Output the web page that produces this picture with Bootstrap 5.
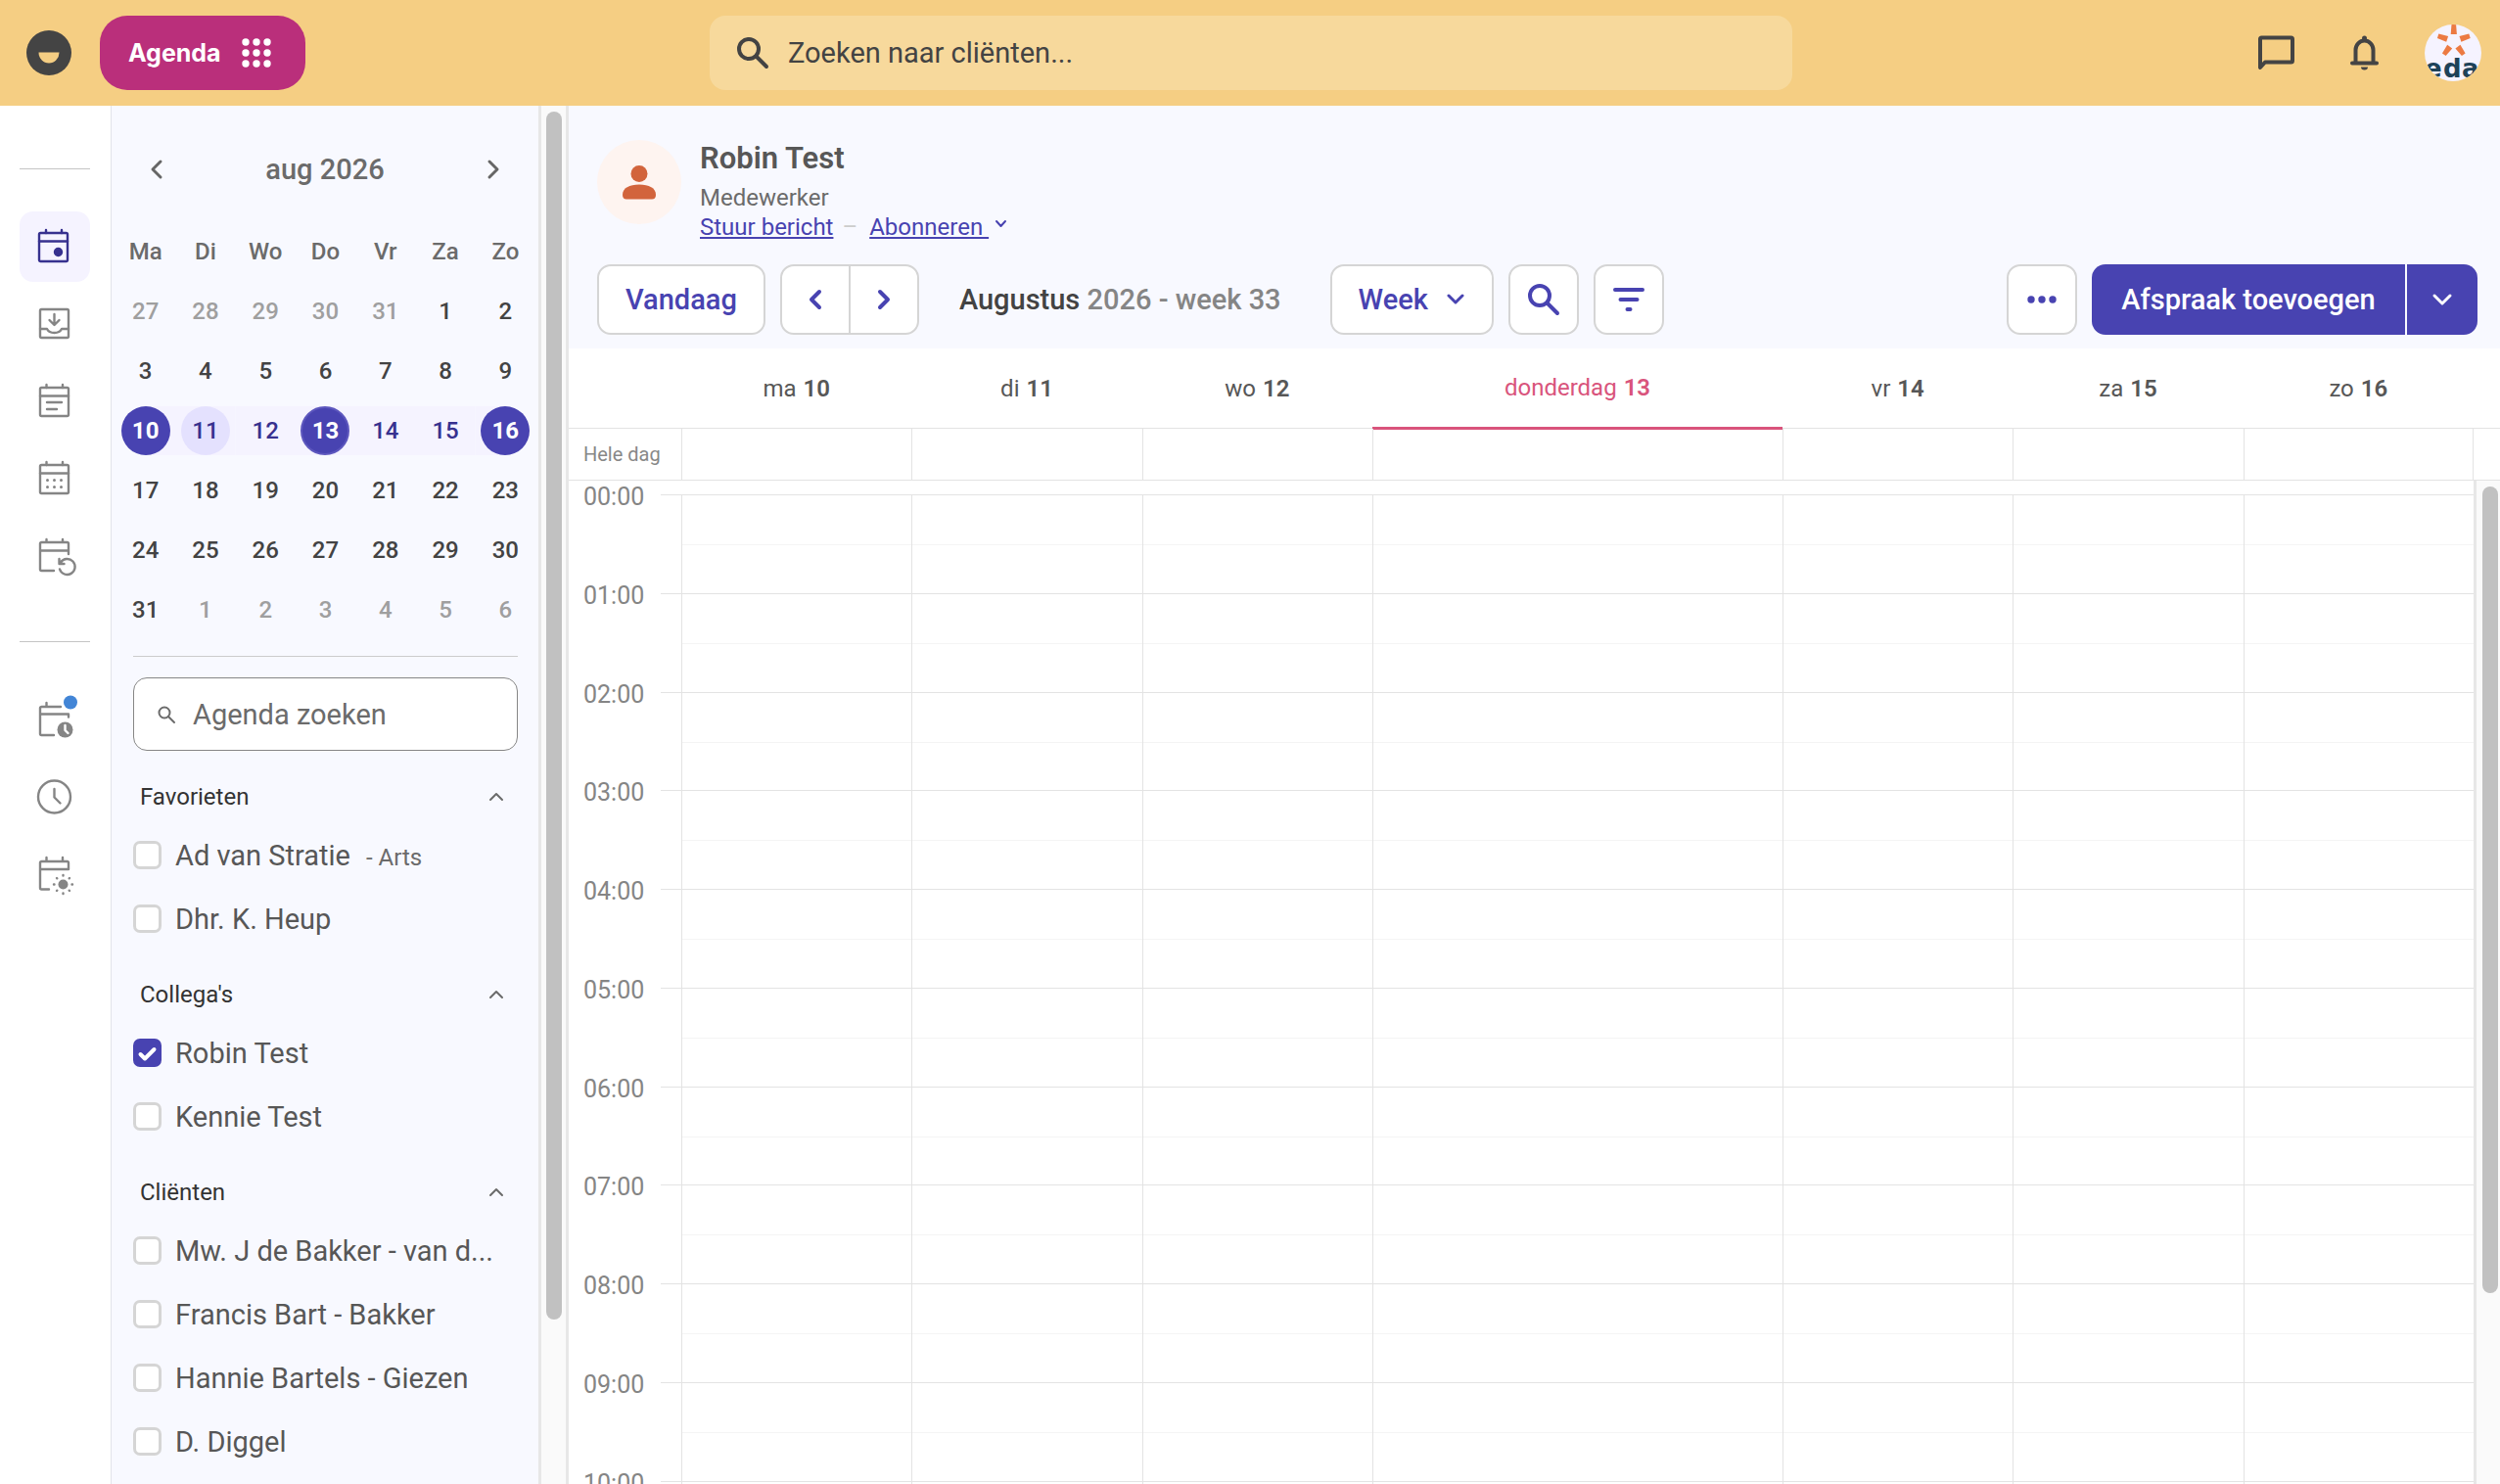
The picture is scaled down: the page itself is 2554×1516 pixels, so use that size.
<!DOCTYPE html>
<html lang="nl">
<head>
<meta charset="utf-8">
<meta name="viewport" content="width=device-width, initial-scale=1">
<title>Agenda</title>
<link rel="stylesheet" href="https://cdn.jsdelivr.net/npm/bootstrap@5.3.0/dist/css/bootstrap.min.css">
<style>
:root{--brand:#4843b1;--brand-dark:#37318f;--panel:#f8f9ff;--line:#e3e3e3;--edge:#d5d5d5;--ink:#434343;--soft:#6b6b6b;--today:#d9547c}
body{font-family:Roboto,sans-serif;font-size:29px;line-height:40px;color:#575757;height:100vh;overflow:hidden;background:#fff}
svg{display:block;overflow:visible;flex:none}
.ico{fill:none;stroke:currentColor;stroke-width:2;stroke-linecap:round;stroke-linejoin:round}
.ico-3{stroke-width:3}
.ico-4{stroke-width:4}
.text-s{font-size:24px;line-height:30px}
.soft{color:var(--soft)}
.fill-area{min-height:0;min-width:0}
.scroll-area{overflow:hidden auto;scrollbar-width:none}
.scroll-area::-webkit-scrollbar{display:none}

/* top bar */
.topbar{height:108px;background:#f5ce83;display:grid;grid-template-columns:725fr 1106fr 723fr;align-items:center;flex:none}
.home-link{margin:0 29px 0 27px}
.app-btn{height:76px;border-radius:28px;background:#ba2f7b;color:#fff;font:700 25px/30px Inter,sans-serif;padding:0 34px 0 28px;gap:21px}
.app-btn:hover{background:#a5286c;color:#fff}
.main-search{height:76px;border-radius:16px;background:#f7d99c;color:var(--ink)}
.main-search input,.side-search input{border:0;background:none;outline:0;padding:0;min-width:0;color:inherit}
.main-search input::placeholder{color:var(--ink);opacity:1}
.top-tools{padding-right:19px;gap:57px}
.top-icon{color:#444;padding:0;border:0;background:none}
.top-tools .profile{margin-left:-10px}

/* icon rail */
.rail{width:114px;border-right:1px solid #e2e4ea;flex:none;padding-right:2px}
.rail hr{width:72px;margin:64px 0 43px;border-color:#c4c4c4;opacity:1}
.rail hr+div+hr{margin-top:51px}
.rail-list{gap:7px}
.rail .ico{stroke-width:2.4}
.rail-item{width:72px;height:72px;border-radius:14px;color:#858585;display:flex;align-items:center;justify-content:center}
.rail-item.active{background:#f5f3ff;color:var(--brand-dark)}

/* side panel */
.side{width:436px;background:var(--panel);flex:none}
.month-nav{margin:39px 20px 0}
.month-nav button{width:52px;height:52px;padding:0;border:0;background:none;color:#666;display:flex;align-items:center;justify-content:center}
.month-nav span{font-weight:500}
.mini{width:429px;table-layout:fixed;margin:27px 0 0 4px;font-size:24px;line-height:30px;text-align:center}
.mini th,.mini td{height:61px;padding:0}
.mini th{font-weight:500;color:var(--soft)}
.day{width:50px;height:50px;border:0;border-radius:50%;padding:0;background:none;font-weight:500;color:var(--ink)}
.out .day{color:#9f9f9f}
.span{background:linear-gradient(#f5f3ff,#f5f3ff) center/100% 50px no-repeat}
.span .day{color:var(--brand-dark)}
.span.first{background-position:right;background-size:50% 50px}
.span.last{background-position:left;background-size:50% 50px}
.span .day.hover{background:#e4e1fe}
.span .day.on{background:var(--brand);color:#fff;font-weight:700}
.span .day.now{border:2px solid #5d57be}
.side-body{margin:17px 21px 0 22px;border-top:1px solid #ccc;padding-top:21px}
.side-search{height:75px;border:1px solid #868686;border-radius:14px;background:#fff;padding:0 24px;gap:18px;color:var(--soft);margin-bottom:19px}
.side-search input::placeholder{color:var(--soft);opacity:1}
.group{margin-bottom:17px}
.group-head{width:100%;height:55px;border:0;background:none;padding:0 15px 0 7px;color:#333}
.pick{height:65px;gap:14px}
.pick .form-check-input{width:29px;height:29px;margin:0;border:3px solid var(--edge);border-radius:7px;flex:none;background-color:#fff}
.pick .form-check-input:checked{background:var(--brand) url("data:image/svg+xml,%3Csvg xmlns='http://www.w3.org/2000/svg' viewBox='0 0 29 29'%3E%3Cpath d='M7.500 16l4.500 4.500 9.500-9.500' fill='none' stroke='%23fff' stroke-width='4' stroke-linecap='round' stroke-linejoin='round'/%3E%3C/svg%3E") center/29px no-repeat;border-color:var(--brand)}

/* scroll bars */
.track{display:grid;justify-content:center;background:#fafafa;border:solid #e7e7e7;border-width:0 0 0 3px;padding:6px 0;flex:none;grid-template-columns:16px}
.track i{background:#c1c1c1;border-radius:8px}
.side-track{width:31px;border-right-width:3px;grid-template-rows:1234fr 162fr}
.week-track{width:27px;grid-template-rows:824fr 189fr;justify-content:end;padding-right:2px}

/* main */
.page-head{background:var(--panel);padding:34px 23px 14px 29px}
.face{width:86px;height:86px;margin-top:1px;border-radius:50%;background:#fef4f0;color:#d2643c;display:flex;align-items:center;justify-content:center}
.who{margin-left:19px}
.who a{color:var(--brand);white-space:pre}
.who-name{font-size:31px;font-weight:600;margin-bottom:5px}
.dash{color:#ccc;margin:0 12px 0 9px}
.mini-caret{margin:8px 0 0 7px;color:var(--brand)}
.toolbar{margin-top:23px;gap:15px}
.tool{height:72px;border:2px solid var(--edge);border-radius:14px;background-color:#fff;color:var(--brand);font-size:29px;font-weight:500;line-height:40px;padding:0 27px;display:flex;align-items:center;justify-content:center}
.tool:hover{background-color:#f5f3ff;border-color:var(--edge);color:var(--brand)}
.square{width:72px;padding:0}
.btn-group>.tool.join:not(:first-child){margin-left:-2px}
.add{background:var(--brand);border:0;color:#fff;width:320px}
.add:hover{background:var(--brand-dark);color:#fff}
.add.square{width:72px}
.btn-group>.add.square:not(:first-child){margin-left:2px}
.period{font-weight:500;color:#858585;margin:0 35px 0 26px}
.period span{color:var(--ink)}
select.tool{appearance:none;width:167px;padding:0 0 0 27px;background-image:url("data:image/svg+xml,%3Csvg xmlns='http://www.w3.org/2000/svg' viewBox='0 0 18 12'%3E%3Cpath d='M2 2l7 7 7-7' fill='none' stroke='%234843b1' stroke-width='3' stroke-linecap='round' stroke-linejoin='round'/%3E%3C/svg%3E");background-size:18px 12px;background-position:right 28px center;background-repeat:no-repeat}
.days{display:grid;grid-template-columns:94px 21px repeat(3,minmax(0,100fr)) minmax(0,178fr) repeat(3,minmax(0,100fr))}
.day-row{border-bottom:1px solid var(--line);padding-right:27px;flex:none}
.day-row>*{display:flex;align-items:center;justify-content:center}
.heads{height:82px}
.heads .today{color:var(--today);border-bottom:3px solid var(--today);margin-bottom:-2px}
.heads b{font-weight:600;margin-left:7px}
.allday{height:53px;font-size:20px;color:#888}
.allday>:nth-child(n+2){border-left:1px solid var(--line)}
.allday>:last-child{border-right:1px solid var(--line)}
.allday .lbl{grid-column:1/3;justify-content:flex-start;padding-left:15px}
.hours{height:2418px;margin-top:14px;display:grid;grid-template-rows:repeat(24,1fr);line-height:30px;font-size:25px}
.hours time{color:#858585;margin-top:-12px;padding-left:15px}
.tick{border-top:1px solid var(--line)}
.slot{border:solid var(--line);border-width:1px 0 0 1px;background:linear-gradient(#f4f4f4,#f4f4f4) 0 50px/100% 1px no-repeat}
</style>
<script src="https://cdn.jsdelivr.net/npm/bootstrap@5.3.0/dist/js/bootstrap.bundle.min.js"></script>
</head>
<body class="d-flex flex-column">

<header class="topbar">
  <div class="d-flex align-items-center">
    <a class="home-link" href="#" aria-label="Start"><svg width="46" height="46" viewBox="0 0 46 46"><circle cx="23" cy="23" r="23" fill="#444"/><path d="M12.500 22.500h21a10.500 11 0 0 1-21 0z" fill="#f5ce83"/></svg></a>
    <button class="btn app-btn d-flex align-items-center" type="button">Agenda
      <svg width="30" height="30" viewBox="0 0 30 30" fill="#fff"><circle cx="4" cy="4" r="3.700"/><circle cx="15" cy="4" r="3.700"/><circle cx="26" cy="4" r="3.700"/><circle cx="4" cy="15" r="3.700"/><circle cx="15" cy="15" r="3.700"/><circle cx="26" cy="15" r="3.700"/><circle cx="4" cy="26" r="3.700"/><circle cx="15" cy="26" r="3.700"/><circle cx="26" cy="26" r="3.700"/></svg>
    </button>
  </div>
  <label class="main-search d-flex align-items-center px-4">
    <svg class="ico ico-4 mx-1" width="32" height="32" viewBox="0 0 32 32"><circle cx="12" cy="12" r="10"/><path d="M19.500 19.500L30 30"/></svg>
    <input class="flex-fill ms-3" type="text" placeholder="Zoeken naar cliënten..." aria-label="Zoeken naar cliënten">
  </label>
  <div class="top-tools d-flex align-items-center justify-content-end">
    <button class="top-icon" type="button" aria-label="Berichten"><svg class="ico ico-4" width="37" height="36" viewBox="0 0 37 36"><path d="M2 33V4a1.500 1.500 0 0 1 1.500-1.500h30A1.500 1.500 0 0 1 35 4v22a1.500 1.500 0 0 1-1.500 1.500H7z"/></svg></button>
    <button class="top-icon" type="button" aria-label="Meldingen"><svg class="ico ico-4" width="29" height="36" viewBox="0 0 29 36"><path d="M2 28.500h25M5.500 28V15a9 9.500 0 0 1 18 0v13"/><path d="M11 32.500h7a3.500 3 0 0 1-7 0z" fill="currentColor" stroke="none"/><circle cx="14.500" cy="3" r="2.500" fill="currentColor" stroke="none"/></svg></button>
    <button class="top-icon profile" type="button" aria-label="Profiel"><svg width="58" height="58" viewBox="0 0 58 58"><clipPath id="c"><circle cx="29" cy="29" r="29"/></clipPath><g clip-path="url(#c)"><path fill="#f5f3ff" d="M0 0h58v58H0z"/><g fill="#ec7a42"><path id="r" d="M27.500 0h4.600l.8 10h-6.200z"/><use href="#r" transform="rotate(72 29.800 17)"/><use href="#r" transform="rotate(144 29.800 17)"/><use href="#r" transform="rotate(216 29.800 17)"/><use href="#r" transform="rotate(288 29.800 17)"/></g><text x="0 19 38" y="54" font-family="DejaVu Sans" font-weight="700" font-size="26" fill="#1e4258">eda</text></g></svg></button>
  </div>
</header>

<div class="d-flex flex-fill fill-area">
  <nav class="rail d-flex flex-column align-items-center" aria-label="Onderdelen">
    <hr>
    <div class="rail-list d-flex flex-column">
      <a class="rail-item active" href="#" aria-label="Agenda"><svg class="ico" width="36" height="36"><rect x="2" y="4" width="29" height="29" rx="1.500"/><path d="M2 12.500h29M9 4V1M25 4V1"/><circle cx="21.500" cy="23.500" r="3.500" fill="currentColor"/></svg></a>
      <a class="rail-item" href="#" aria-label="Inbox"><svg class="ico" width="36" height="36"><rect x="3" y="3" width="29" height="29" rx="1.500"/><path d="M3 23h7q2 4 7.500 4t7.500-4h7M17.500 8v10M12.500 14l5 5 5-5"/></svg></a>
      <a class="rail-item" href="#" aria-label="Afspraken"><svg class="ico" width="36" height="36"><rect x="3" y="4" width="29" height="29" rx="1.500"/><path d="M3 12.500h29M9.500 4V1M26 4V1M10 19h15M10 26h10"/></svg></a>
      <a class="rail-item" href="#" aria-label="Maand"><svg class="ico" width="36" height="36"><rect x="3" y="4" width="29" height="29" rx="1.500"/><path d="M3 12.500h29M9.500 4V1M26 4V1"/><path stroke-width="3" d="M10.500 19.500h0M17.500 19.500h0M24.500 19.500h0M10.500 26.500h0M17.500 26.500h0M24.500 26.500h0"/></svg></a>
      <a class="rail-item" href="#" aria-label="Herhalingen"><svg class="ico" width="36" height="36"><path d="M17 33H4.500A1.500 1.500 0 0 1 3 31.500v-26A1.500 1.500 0 0 1 4.500 4h26A1.500 1.500 0 0 1 32 5.500V16M3 12.500h29M9.500 4V1M26 4V1M24 24.500a8 8 0 1 1-1 7M22.500 21v5h5"/></svg></a>
    </div>
    <hr>
    <div class="rail-list d-flex flex-column">
      <a class="rail-item" href="#" aria-label="Wachtlijst"><svg class="ico" width="36" height="36"><path d="M17 34H4.500A1.500 1.500 0 0 1 3 32.500v-26A1.500 1.500 0 0 1 4.500 5H24M3 12.500h29v3M9.500 5V1"/><circle cx="34" cy=".5" r="7" fill="#4285d6" stroke="none"/><circle cx="28.500" cy="28.500" r="8" fill="currentColor" stroke="none"/><path d="M28.500 24v5l3 3" stroke="#fff"/></svg></a>
      <a class="rail-item" href="#" aria-label="Uren"><svg class="ico" width="36" height="36"><circle cx="17.500" cy="18" r="16.500"/><path d="M17.500 10v8.500l6 6"/></svg></a>
      <a class="rail-item" href="#" aria-label="Verlof"><svg class="ico" width="36" height="36"><path d="M12 33.500H4.500A1.500 1.500 0 0 1 3 32V6.500A1.500 1.500 0 0 1 4.500 5h26A1.500 1.500 0 0 1 32 6.500v6.500H3M9.500 5V1M26 5V1"/><circle cx="26.500" cy="28.500" r="5" fill="currentColor" stroke="none"/><path d="M26.500 19v.5M26.500 37.500v.5M17 28.500h.5M35.500 28.500h.5M20 22l.3.3M32.700 34.700l.3.3M20 35l.3-.3M32.700 22.300l.3-.3"/></svg></a>
    </div>
  </nav>

  <aside class="side scroll-area">
    <div class="month-nav d-flex align-items-center justify-content-between">
      <button type="button" aria-label="Vorige maand"><svg class="ico ico-3" width="12" height="20"><path d="M10 2L2 10l8 8"/></svg></button>
      <span class="soft">aug 2026</span>
      <button type="button" aria-label="Volgende maand"><svg class="ico ico-3" width="12" height="20"><path d="M2 2l8 8-8 8"/></svg></button>
    </div>
    <table class="mini">
      <thead><tr><th>Ma</th><th>Di</th><th>Wo</th><th>Do</th><th>Vr</th><th>Za</th><th>Zo</th></tr></thead>
      <tbody id="month"></tbody>
    </table>
    <div class="side-body">
      <label class="side-search d-flex align-items-center">
        <svg class="ico" width="18" height="18"><circle cx="7" cy="7" r="5.500"/><path d="M11 11l6 6"/></svg>
        <input class="flex-fill" type="text" placeholder="Agenda zoeken" aria-label="Agenda zoeken">
      </label>
      <div id="groups"></div>
    </div>
  </aside>
  <div class="track side-track" aria-hidden="true"><i></i></div>

  <main class="flex-fill d-flex flex-column fill-area">
    <div class="page-head">
      <div class="d-flex">
        <div class="face"><svg width="36" height="36" fill="currentColor"><circle cx="18" cy="9.500" r="8.500"/><path d="M1 31c0-7 7-10.500 17-10.500S35 24 35 31c0 3-1.500 4.500-4 4.500H5C2.500 35.500 1 34 1 31z"/></svg></div>
        <div class="who">
          <div class="who-name">Robin Test</div>
          <div class="text-s soft">Medewerker</div>
          <div class="text-s d-flex"><a href="#">Stuur bericht</a><span class="dash">–</span><a href="#">Abonneren </a>
            <svg class="ico mini-caret" width="11" height="8"><path d="M1 1l4.500 5L10 1"/></svg></div>
        </div>
      </div>
      <div class="toolbar d-flex align-items-center">
        <button class="btn tool" type="button">Vandaag</button>
        <div class="btn-group">
          <button class="btn tool square" type="button" aria-label="Vorige week"><svg class="ico ico-4" width="12" height="20"><path d="M10 2L2 10l8 8"/></svg></button>
          <button class="btn tool square join" type="button" aria-label="Volgende week"><svg class="ico ico-4" width="12" height="20"><path d="M2 2l8 8-8 8"/></svg></button>
        </div>
        <div class="period"><span>Augustus</span> 2026 - week 33</div>
        <select class="tool" aria-label="Weergave"><option>Week</option><option>Dag</option><option>Maand</option></select>
        <button class="btn tool square" type="button" aria-label="Zoeken"><svg class="ico ico-4" width="32" height="32"><circle cx="12" cy="12" r="10"/><path d="M19.500 19.500L30 30"/></svg></button>
        <button class="btn tool square" type="button" aria-label="Filter"><svg class="ico ico-4" width="32" height="24"><path d="M2 2h28M7.500 12h17M14.500 22h3"/></svg></button>
        <button class="btn tool square ms-auto" type="button" aria-label="Meer"><svg width="30" height="8" fill="currentColor"><circle cx="4" cy="4" r="3.700"/><circle cx="15" cy="4" r="3.700"/><circle cx="26" cy="4" r="3.700"/></svg></button>
        <div class="btn-group">
          <button class="btn tool add" type="button">Afspraak toevoegen</button>
          <button class="btn tool add square" type="button" aria-label="Meer opties"><svg class="ico ico-3" width="20" height="12"><path d="M2 2l8 8 8-8"/></svg></button>
        </div>
      </div>
    </div>

    <div class="days day-row heads text-s">
      <span></span><span></span><div>ma <b>10</b></div><div>di <b>11</b></div><div>wo <b>12</b></div><div class="today">donderdag <b>13</b></div><div>vr <b>14</b></div><div>za <b>15</b></div><div>zo <b>16</b></div>
    </div>
    <div class="days day-row allday">
      <span class="lbl">Hele dag</span><div></div><div></div><div></div><div></div><div></div><div></div><div></div>
    </div>
    <div class="d-flex flex-fill fill-area">
      <div class="flex-fill scroll-area"><div class="hours" id="hours"></div></div>
      <div class="track week-track" aria-hidden="true"><i></i></div>
    </div>
  </main>
</div>

<script>
// Month view: 27 July up to and including 6 September 2026
let rows = '';
for (let w = 0; w < 6; w++) {
  rows += '<tr>';
  for (let d = 0; d < 7; d++) {
    const date = new Date(2026, 6, 27 + w * 7 + d), n = date.getDate(), aug = date.getMonth() === 7;
    let cell = aug ? '' : 'out', day = 'day';
    if (w === 2) {
      cell = 'span' + (d === 0 ? ' first' : d === 6 ? ' last' : '');
      if (d === 0 || d === 3 || d === 6) day += ' on';
      if (d === 3) day += ' now';
      if (d === 1) day += ' hover';
    }
    rows += `<td class="${cell}"><button type="button" class="${day}">${n}</button></td>`;
  }
  rows += '</tr>';
}
document.getElementById('month').innerHTML = rows;

// Agendas that can be switched on
const groups = [
  ['Favorieten', [['Ad van Stratie', 'Arts'], ['Dhr. K. Heup']]],
  ["Collega's", [['Robin Test', '', true], ['Kennie Test']]],
  ['Cliënten', [['Mw. J de Bakker - van d...'], ['Francis Bart - Bakker'], ['Hannie Bartels - Giezen'], ['D. Diggel']]]
];
document.getElementById('groups').innerHTML = groups.map(([name, people], g) => `
  <section class="group">
    <button type="button" class="group-head text-s d-flex align-items-center justify-content-between">${name}
      <svg class="ico soft" width="14" height="9"><path d="M1 8l6-6 6 6"/></svg></button>
    ${people.map(([who, role, on], i) => `<div class="pick d-flex align-items-center">
      <input class="form-check-input" type="checkbox" id="p${g}${i}"${on ? ' checked' : ''}>
      <label class="text-nowrap" for="p${g}${i}">${who}${role ? `<span class="text-s soft ms-3">- ${role}</span>` : ''}</label></div>`).join('')}
  </section>`).join('');

// Hour rows
document.getElementById('hours').innerHTML = Array.from({length: 24}, (_, h) =>
  `<div class="days"><time>${String(h).padStart(2, '0')}:00</time><div class="tick"></div>${'<div class="slot"></div>'.repeat(7)}</div>`).join('');
</script>
</body>
</html>
